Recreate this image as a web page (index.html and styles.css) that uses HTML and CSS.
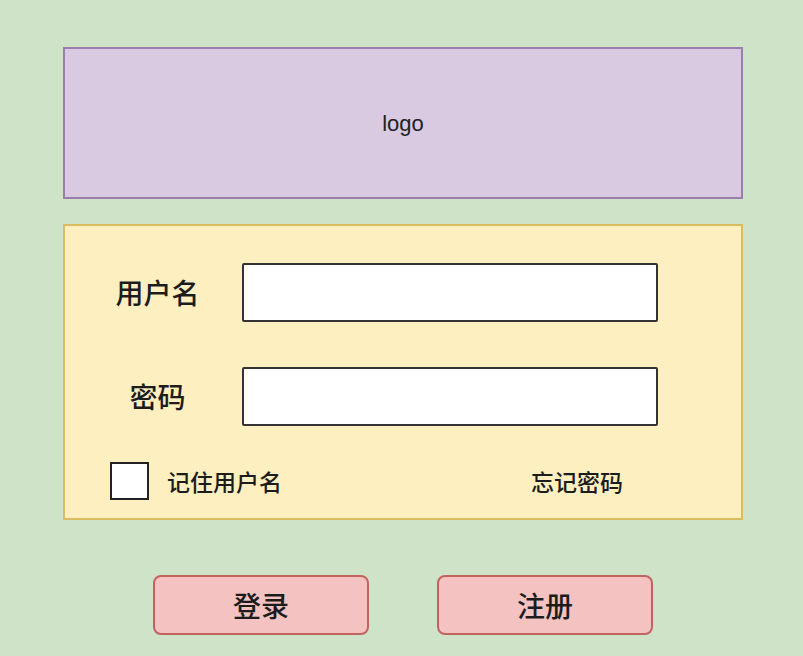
FILE: index.html
```html
<!DOCTYPE html>
<html lang="zh-CN">
<head>
<meta charset="utf-8">
<title>登录</title>
<link rel="stylesheet" href="styles.css">
</head>
<body>
<div class="page">
  <div class="logo-box"><span class="logo-text">logo</span></div>
  <div class="form-box">
    <div class="field-row">
      <div class="label">用户名</div>
      <div class="input"></div>
    </div>
    <div class="field-row">
      <div class="label">密码</div>
      <div class="input"></div>
    </div>
    <div class="options-row">
      <div class="remember">
        <div class="checkbox"></div>
        <span class="small-text">记住用户名</span>
      </div>
      <span class="small-text forgot">忘记密码</span>
    </div>
  </div>
  <div class="buttons">
    <div class="btn">登录</div>
    <div class="btn">注册</div>
  </div>
</div>
</body>
</html>
```
FILE: styles.css
```css
html, body {
  margin: 0;
  padding: 0;
  background: #cfe3c9;
  width: 803px;
  height: 656px;
  overflow: hidden;
  font-family: "Noto Sans CJK SC", "Liberation Sans", sans-serif;
  color: #1c1c1c;
}

.page {
  padding: 47px 0 0 63px;
  width: 680px;
}

.logo-box {
  box-sizing: border-box;
  height: 152px;
  background: #d9cae2;
  border: 2px solid #9a7fae;
  display: flex;
  align-items: center;
  justify-content: center;
}

.logo-text {
  font-family: "Liberation Sans", Arial, sans-serif;
  font-size: 22px;
  color: #222;
  margin-top: 2px;
}

.form-box {
  box-sizing: border-box;
  margin-top: 25px;
  height: 296px;
  background: #fdefc0;
  border: 2px solid #d9bb60;
  padding: 37px 0 0 35px;
  display: flex;
  flex-direction: column;
}

.field-row {
  display: flex;
  align-items: center;
  height: 59px;
  margin-bottom: 45px;
}

.field-row:nth-child(2) {
  margin-bottom: 36px;
}

.label {
  width: 115px;
  text-align: center;
  font-size: 28px;
  font-weight: 500;
  margin-right: 27px;
  margin-top: -2px;
}

.input {
  box-sizing: border-box;
  width: 416px;
  height: 59px;
  background: #fff;
  border: 2px solid #333;
  border-radius: 2px;
}

.options-row {
  display: flex;
  align-items: center;
  height: 38px;
}

.remember {
  display: flex;
  align-items: center;
  margin-left: 10px;
  width: 421px;
}

.checkbox {
  box-sizing: border-box;
  width: 39px;
  height: 38px;
  background: #fff;
  border: 2px solid #222;
  margin-right: 18px;
}

.small-text {
  font-size: 23px;
  font-weight: 500;
}

.buttons {
  display: flex;
  gap: 68px;
  padding-left: 90px;
  margin-top: 55px;
}

.btn {
  box-sizing: border-box;
  width: 216px;
  height: 60px;
  background: #f3c2c1;
  border: 2px solid #c3635f;
  border-radius: 8px;
  display: flex;
  align-items: center;
  justify-content: center;
  font-size: 28px;
  font-weight: 500;
}
```
